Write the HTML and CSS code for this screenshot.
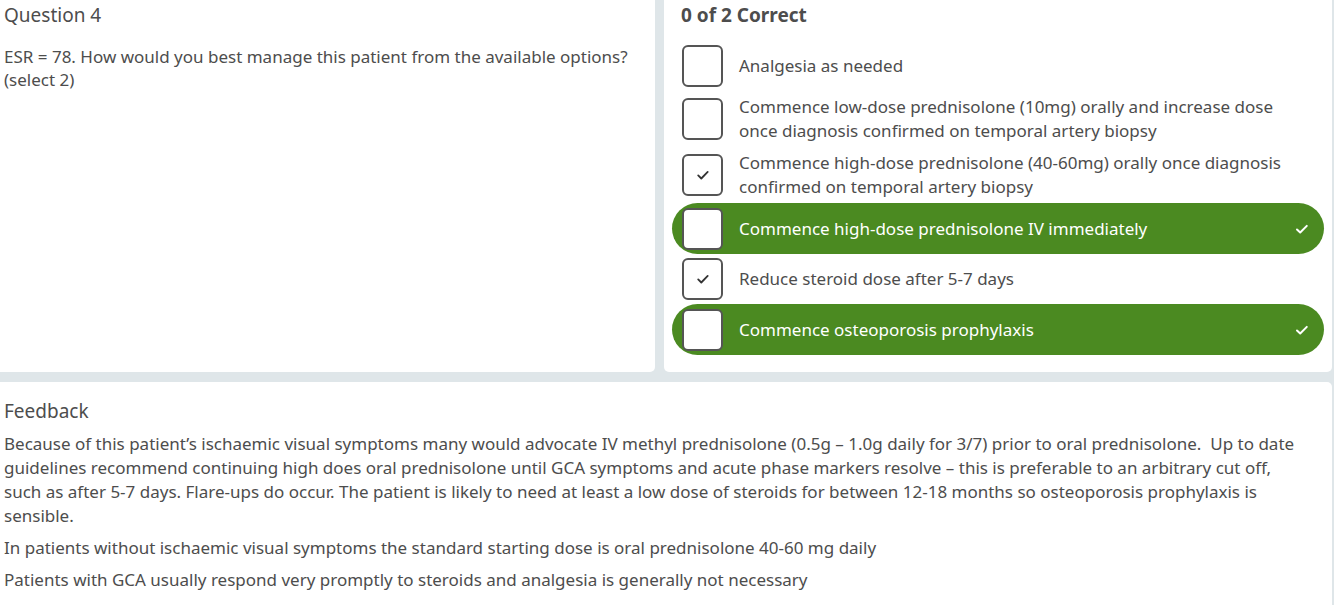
FILE: index.html
```html
<!DOCTYPE html>
<html lang="en">
<head>
<meta charset="utf-8">
<title>Question 4</title>
<link rel="stylesheet" href="styles.css">
</head>
<body>
<div class="page">
  <div class="top">
    <section class="question">
      <h2 class="q-title">Question 4</h2>
      <p class="q-text">ESR = 78. How would you best manage this patient from the available options?<br>(select 2)</p>
    </section>
    <section class="answers">
      <h3 class="score">0 of 2 Correct</h3>
      <ul class="options">
        <li class="option">
          <span class="box"></span>
          <span class="label">Analgesia as needed</span>
        </li>
        <li class="option">
          <span class="box"></span>
          <span class="label">Commence low-dose prednisolone (10mg) orally and increase dose<br>once diagnosis confirmed on temporal artery biopsy</span>
        </li>
        <li class="option">
          <span class="box checked"><svg viewBox="0 0 16 16" width="16" height="16"><path d="M3.2 8.4l3.1 3.1 6.4-6.6" fill="none" stroke="#333" stroke-width="1.8" stroke-linecap="round" stroke-linejoin="round"/></svg></span>
          <span class="label">Commence high-dose prednisolone (40-60mg) orally once diagnosis<br>confirmed on temporal artery biopsy</span>
        </li>
        <li class="option correct">
          <span class="box"></span>
          <span class="label">Commence high-dose prednisolone IV immediately</span>
          <span class="tick"><svg viewBox="0 0 16 16" width="16" height="16"><path d="M3 8.5l3.2 3 6.6-6.6" fill="none" stroke="#fff" stroke-width="2" stroke-linecap="round" stroke-linejoin="round"/></svg></span>
        </li>
        <li class="option">
          <span class="box checked"><svg viewBox="0 0 16 16" width="16" height="16"><path d="M3.2 8.4l3.1 3.1 6.4-6.6" fill="none" stroke="#333" stroke-width="1.8" stroke-linecap="round" stroke-linejoin="round"/></svg></span>
          <span class="label">Reduce steroid dose after 5-7 days</span>
        </li>
        <li class="option correct">
          <span class="box"></span>
          <span class="label">Commence osteoporosis prophylaxis</span>
          <span class="tick"><svg viewBox="0 0 16 16" width="16" height="16"><path d="M3 8.5l3.2 3 6.6-6.6" fill="none" stroke="#fff" stroke-width="2" stroke-linecap="round" stroke-linejoin="round"/></svg></span>
        </li>
      </ul>
    </section>
  </div>
  <section class="feedback">
    <h2 class="fb-title">Feedback</h2>
    <p class="fb-text">Because of this patient’s ischaemic visual symptoms many would advocate IV methyl prednisolone (0.5g – 1.0g daily for 3/7) prior to oral prednisolone.&nbsp; Up to date guidelines recommend continuing high does oral prednisolone until GCA symptoms and acute phase markers resolve – this is preferable to an arbitrary cut off, such as after 5-7 days. Flare-ups do occur. The patient is likely to need at least a low dose of steroids for between 12-18 months so osteoporosis prophylaxis is sensible.</p>
    <p class="fb-text">In patients without ischaemic visual symptoms the standard starting dose is oral prednisolone 40-60 mg daily</p>
    <p class="fb-text">Patients with GCA usually respond very promptly to steroids and analgesia is generally not necessary</p>
  </section>
</div>
</body>
</html>
```

FILE: styles.css
```css
* { box-sizing: border-box; }
html, body { margin: 0; padding: 0; }
body {
  background: #dfe6e9;
  font-family: "Noto Sans", "Open Sans", sans-serif;
  color: #4d4d4d;
  width: 1334px;
  height: 605px;
  overflow: hidden;
}
.page {
  width: 1332px;
  height: 605px;
  display: flex;
  flex-direction: column;
  gap: 10px;
}
.top {
  display: grid;
  grid-template-columns: 655px 1fr;
  gap: 9px;
  height: 372px;
}
.question {
  background: #fff;
  border-radius: 0 0 5px 0;
  padding: 2px 4px;
}
.q-title {
  margin: 0;
  font-size: 19px;
  font-weight: 400;
  line-height: 26px;
}
.q-text {
  margin: 17px 0 0;
  font-size: 17px;
  line-height: 23px;
}
.answers {
  background: #fff;
  border-radius: 0 0 5px 5px;
  padding: 2px 8px 0 8px;
}
.score {
  margin: 0 0 0 9px;
  font-size: 19px;
  font-weight: 700;
  line-height: 26px;
}
.options {
  list-style: none;
  margin: 13px 0 0;
  padding: 0;
}
.option {
  display: flex;
  align-items: center;
  padding: 4px 10px;
  min-height: 50px;
  border-radius: 26px;
  font-size: 17px;
  line-height: 24px;
}
.option.correct {
  background: #4b8a21;
  color: #fff;
  min-height: 51px;
}
.box {
  flex: none;
  width: 41px;
  height: 42px;
  border: 2px solid #555;
  border-radius: 6px;
  background: #fff;
  display: flex;
  align-items: center;
  justify-content: center;
  margin-right: 16px;
}
.label { flex: 1; }
.tick {
  flex: none;
  display: flex;
  margin-right: 4px;
}
.feedback {
  flex: 1;
  background: #fff;
  border-radius: 0 5px 0 0;
  padding: 16px 26px 0 4px;
}
.fb-title {
  margin: 0;
  font-size: 19px;
  font-weight: 400;
  line-height: 26px;
}
.fb-text {
  margin: 8px 0 0;
  font-size: 17px;
  line-height: 24px;
}
```
